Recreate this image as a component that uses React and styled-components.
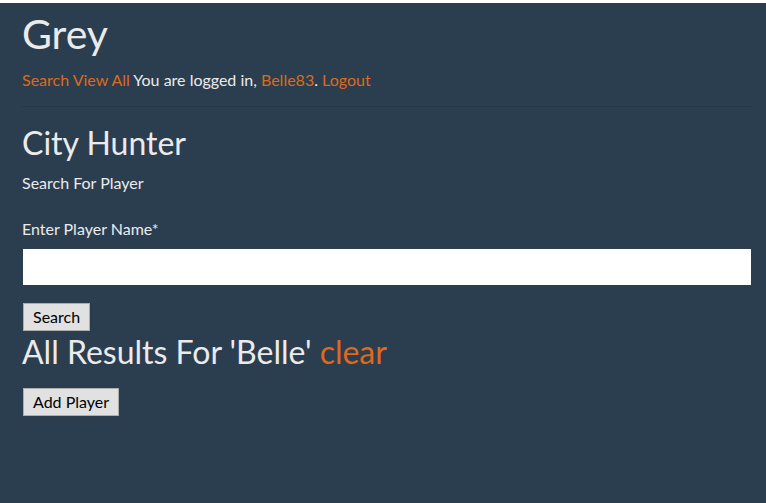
import React from 'react';
import styled, { createGlobalStyle } from 'styled-components';

const GlobalStyle = createGlobalStyle`
  html, body {
    margin: 0;
    padding: 0;
    background: #ffffff;
  }
  body {
    font-family: Lato, "Open Sans", sans-serif;
    font-size: 16px;
    line-height: 1.4;
    color: #ebebeb;
  }
`;

const Page = styled.div`
  margin-top: 3px;
  min-height: 500px;
  background: #2b3e50;
  padding: 8px 14px 0 22px;
  box-sizing: border-box;
`;

const Title = styled.h1`
  margin: 0;
  font-size: 41px;
  font-weight: 400;
  line-height: 1.1;
  color: #ebebeb;
`;

const Nav = styled.div`
  margin-top: 13px;
`;

const Link = styled.a`
  color: #df691a;
  text-decoration: none;
  cursor: pointer;
`;

const Rule = styled.hr`
  margin: 15px 0 18px;
  border: 0;
  border-top: 1px solid #26374a;
`;

const Heading = styled.h2`
  margin: ${({ $top }) => $top || 0}px 0 0;
  font-size: 32px;
  font-weight: 400;
  line-height: 1.1;
  color: #ebebeb;
`;

const Subtitle = styled.p`
  margin: 11px 0 0;
`;

const Form = styled.form`
  margin-top: 24px;
  display: flex;
  flex-direction: column;
  align-items: flex-start;
`;

const Label = styled.label`
  display: block;
`;

const Input = styled.input`
  margin-top: 8px;
  width: 100%;
  height: 38px;
  box-sizing: border-box;
  border: 1px solid #2b3e50;
  border-radius: 0;
  background: #ffffff;
  padding: 6px 16px;
  font-family: inherit;
  font-size: 16px;
`;

const Button = styled.button`
  margin: ${({ $top }) => $top || 0}px 0 0 1px;
  height: 28px;
  padding: 0 9px;
  background: #e1e1e1;
  border: 1px solid #adadad;
  border-radius: 0;
  font-family: Lato, "Open Sans", sans-serif;
  font-size: 16px;
  color: #000000;
  line-height: 1;
`;

const Actions = styled.div`
  margin-top: 18px;
`;

export default function App() {
  return (
    <>
      <GlobalStyle />
      <Page>
        <Title>Grey</Title>
        <Nav>
          <Link>Search</Link> <Link>View All</Link> You are logged in,{' '}
          <Link>Belle83</Link>. <Link>Logout</Link>
        </Nav>
        <Rule />
        <Heading>City Hunter</Heading>
        <Subtitle>Search For Player</Subtitle>
        <Form onSubmit={(e) => e.preventDefault()}>
          <Label htmlFor="player">Enter Player Name*</Label>
          <Input id="player" type="text" />
          <Button type="submit" $top={17}>Search</Button>
        </Form>
        <Heading $top={3}>
          All Results For 'Belle' <Link>clear</Link>
        </Heading>
        <Actions>
          <Button type="button">Add Player</Button>
        </Actions>
      </Page>
    </>
  );
}
